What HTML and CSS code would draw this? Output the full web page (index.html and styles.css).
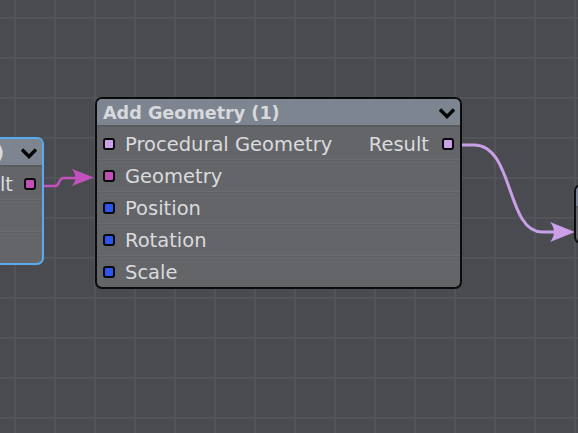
FILE: index.html
```html
<!DOCTYPE html>
<html>
<head>
<meta charset="utf-8">
<link rel="stylesheet" href="styles.css">
</head>
<body>
<div class="canvas">
  <svg class="wires" width="578" height="433" viewBox="0 0 578 433">
    <path class="wire wire-geo" d="M42,186 L55,186 C60,186 58,178 64,178 L82,178"/>
    <path class="arrow arrow-geo" d="M94,177.5 L72,169 Q79,177.5 72,186 Z"/>
    <path class="wire wire-proc" d="M460,145 L474,145 C514,145 506,232 542,232 L560,232"/>
    <path class="arrow arrow-proc" d="M575,232 L550,222 Q558,232 550,242 Z"/>
  </svg>

  <div class="node node-left">
    <div class="node-header header-end">
      <span class="node-title">)</span>
      <svg class="chevron" width="18" height="12" viewBox="0 0 18 12"><path d="M2,2.5 L9,9.5 L16,2.5"/></svg>
    </div>
    <div class="node-body">
      <div class="row row-end"><span class="label">Result</span><span class="socket s-geo"></span></div>
      <div class="row"></div>
      <div class="row"></div>
    </div>
  </div>

  <div class="node node-main">
    <div class="node-header">
      <span class="node-title">Add Geometry (1)</span>
      <svg class="chevron" width="18" height="12" viewBox="0 0 18 12"><path d="M2,2.5 L9,9.5 L16,2.5"/></svg>
    </div>
    <div class="node-body">
      <div class="row">
        <span class="socket s-proc"></span><span class="label">Procedural Geometry</span>
        <span class="spacer"></span>
        <span class="label label-out">Result</span><span class="socket s-proc"></span>
      </div>
      <div class="row"><span class="socket s-geo"></span><span class="label">Geometry</span></div>
      <div class="row"><span class="socket s-vec"></span><span class="label">Position</span></div>
      <div class="row"><span class="socket s-vec"></span><span class="label">Rotation</span></div>
      <div class="row"><span class="socket s-vec"></span><span class="label">Scale</span></div>
    </div>
  </div>

  <div class="node node-right">
    <div class="node-header header-right"></div>
    <div class="node-body"></div>
  </div>
</div>
</body>
</html>
```
FILE: styles.css
```css
html, body {
  margin: 0;
  padding: 0;
  background: #4a4b50;
}

.canvas {
  position: relative;
  width: 578px;
  height: 433px;
  overflow: hidden;
  background-color: #4a4b50;
  background-image:
    linear-gradient(to right, #535459 0, #535459 2px, transparent 2px),
    linear-gradient(to bottom, #535459 0, #535459 2px, transparent 2px);
  background-size: 40px 40px;
  background-position: 14px 17px;
  font-family: "DejaVu Sans", Verdana, sans-serif;
}

.wires {
  position: absolute;
  left: 0;
  top: 0;
}

.wire {
  fill: none;
  stroke-width: 2.6;
}

.wire-geo { stroke: #c351bd; }
.arrow-geo { fill: #c351bd; }
.wire-proc { stroke: #c99fe7; stroke-width: 3; }
.arrow-proc { fill: #c99fe7; }

.node {
  position: absolute;
  box-sizing: border-box;
  border: 2px solid #0c0c0d;
  border-radius: 7px;
  background: #646568;
  overflow: hidden;
  display: flex;
  flex-direction: column;
}

.node-main {
  left: 95px;
  top: 97px;
  width: 367px;
  height: 192px;
}

.node-left {
  left: -300px;
  top: 137px;
  width: 344px;
  height: 128px;
  border-color: #58abef;
}

.node-right {
  left: 574px;
  top: 184px;
  width: 200px;
  height: 60px;
}

.node-header {
  height: 26px;
  flex: none;
  display: flex;
  align-items: center;
  justify-content: space-between;
  padding: 0 4px 0 6px;
  background: #7d8590;
  border-bottom: 2px solid #5a5b5f;
}

.header-end {
  justify-content: flex-end;
  gap: 16px;
}

.header-right {
  height: 20px;
  background: #7a8195;
}

.node-title {
  font-weight: bold;
  font-size: 17.6px;
  color: #d7d9dd;
  white-space: nowrap;
  padding-top: 1px;
}

.chevron {
  flex: none;
  margin-top: 1px;
}

.chevron path {
  fill: none;
  stroke: #050505;
  stroke-width: 3.4;
  stroke-linejoin: miter;
}

.node-body {
  flex: 1;
  display: flex;
  flex-direction: column;
}

.row {
  height: 32px;
  box-sizing: border-box;
  display: flex;
  align-items: center;
  padding: 0 6px;
  gap: 10px;
}

.row + .row {
  border-top: 1px solid #6c6d70;
  box-shadow: inset 0 1px 0 #5e5f62;
}

.row-end {
  justify-content: flex-end;
  gap: 11px;
}

.spacer {
  flex: 1;
}

.label {
  font-size: 19.5px;
  color: #d9dbde;
  white-space: nowrap;
  line-height: 1;
  padding-top: 3px;
}

.label-out {
  margin-right: 3px;
}

.socket {
  flex: none;
  width: 12px;
  height: 12px;
  box-sizing: border-box;
  border: 2px solid #0a0a0a;
  border-radius: 3px;
  margin-top: 1px;
}

.s-proc { background: #c9a2e8; }
.s-geo { background: #c24fb6; }
.s-vec { background: #3053f3; }
```
